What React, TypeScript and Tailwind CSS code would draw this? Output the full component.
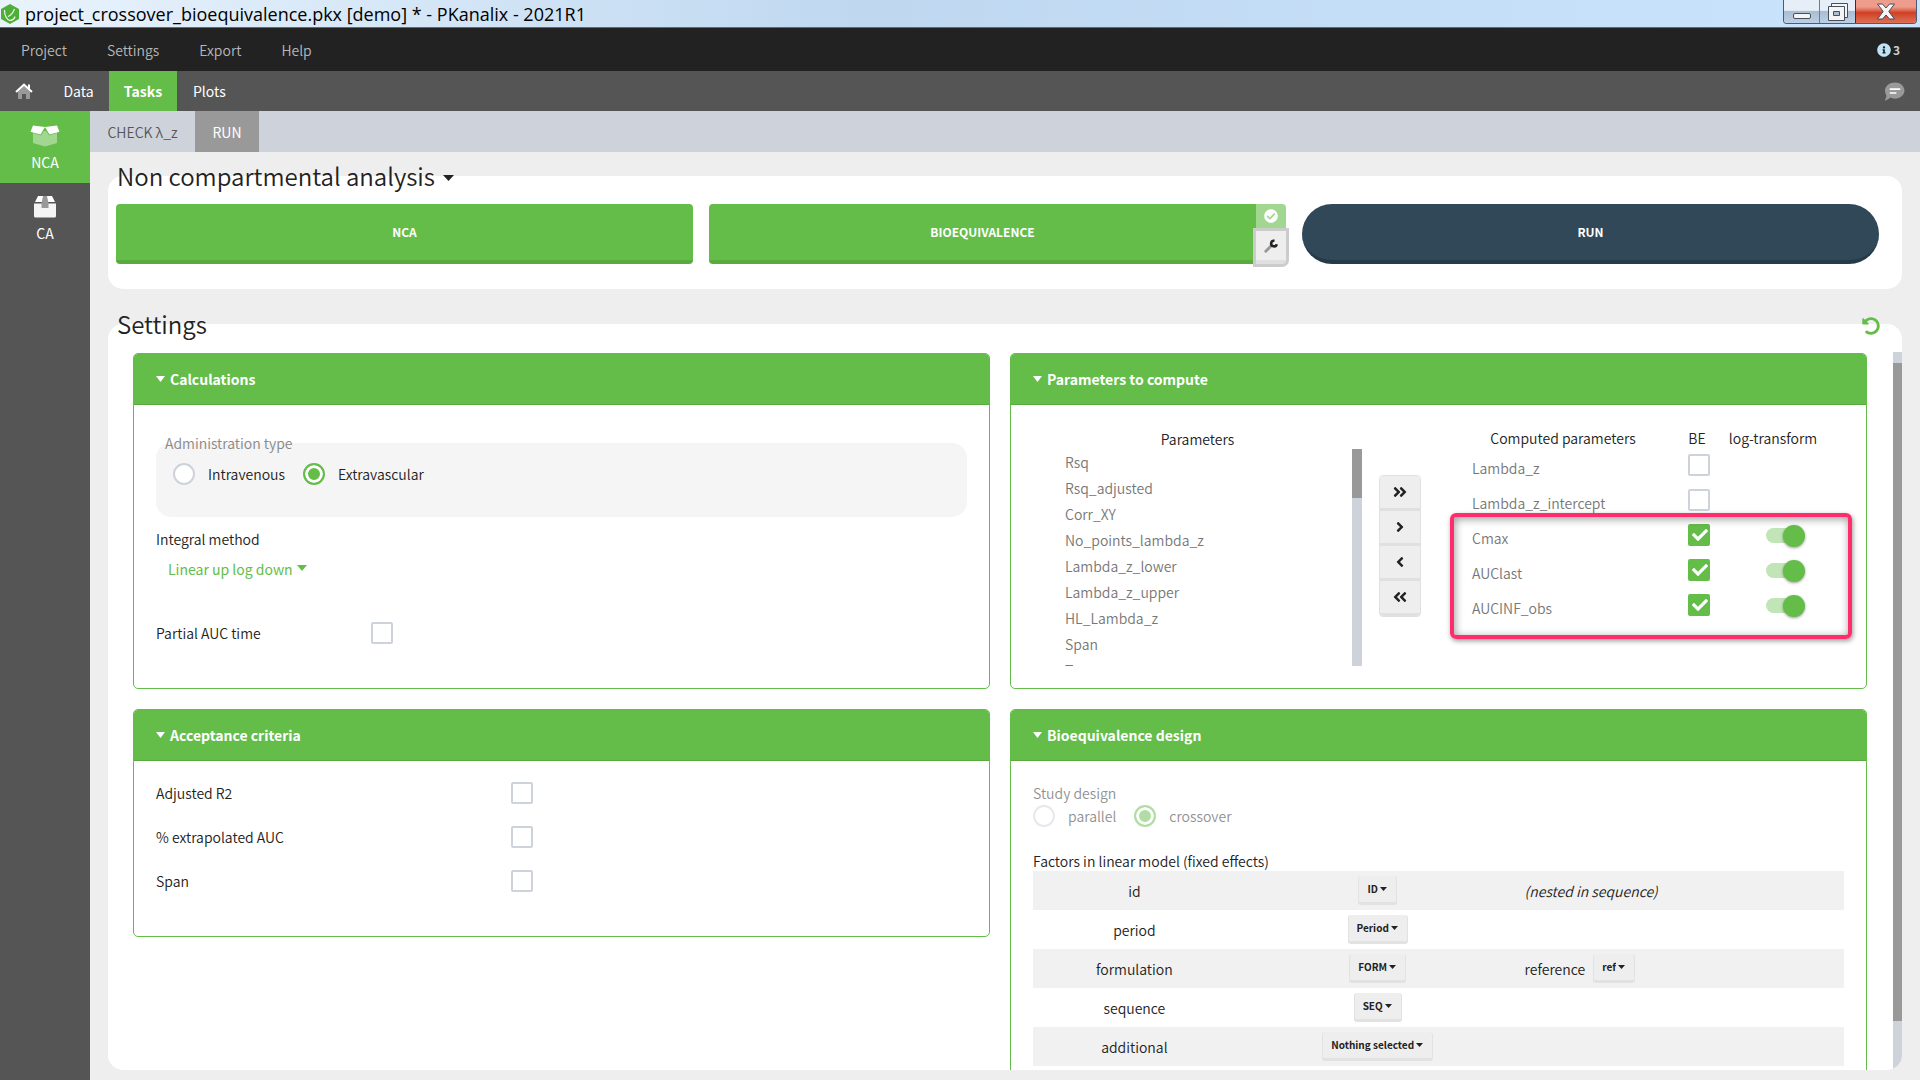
import { useState } from "react";
import type { ReactNode } from "react";
import {
  FaAngleDoubleLeft,
  FaAngleDoubleRight,
  FaAngleLeft,
  FaAngleRight,
  FaCheck,
  FaCheckCircle,
  FaInfoCircle,
  FaUndoAlt,
} from "react-icons/fa";

const MENU = ["Project", "Settings", "Export", "Help"];

const PARAMETERS = [
  "Rsq",
  "Rsq_adjusted",
  "Corr_XY",
  "No_points_lambda_z",
  "Lambda_z_lower",
  "Lambda_z_upper",
  "HL_Lambda_z",
  "Span",
  "T0",
];

const COMPUTED = [
  { name: "Lambda_z", be: false },
  { name: "Lambda_z_intercept", be: false },
  { name: "Cmax", be: true },
  { name: "AUClast", be: true },
  { name: "AUCINF_obs", be: true },
];

const FACTORS = [
  { name: "id", value: "ID" },
  { name: "period", value: "Period" },
  { name: "formulation", value: "FORM" },
  { name: "sequence", value: "SEQ" },
  { name: "additional", value: "Nothing selected" },
];

const CRITERIA = ["Adjusted R2", "% extrapolated AUC", "Span"];

export default function App() {
  return (
    <div className="flex h-screen flex-col overflow-hidden bg-[#eeeeee] font-['Noto_Sans_CJK_SC','Open_Sans',sans-serif] text-sm leading-5 font-[350] text-[#222222]">
      <TitleBar />

      <nav className="flex h-[43px] shrink-0 items-center pr-5 pl-[21px] bg-[#222222]">
        <div className="flex flex-1 gap-10 text-[#b8b8b8]">
          {MENU.map((m) => (
            <button key={m} type="button">{m}</button>
          ))}
        </div>
        <button type="button" className="flex items-center gap-[2px] text-xs font-bold text-[#cccccc]">
          <FaInfoCircle className="h-[14px] w-[14px] text-[#bfe3f5]" />3
        </button>
      </nav>

      <nav className="flex h-10 shrink-0 items-stretch bg-[#555555] pr-[15px] text-white">
        <button type="button" aria-label="Home" className="flex w-12 items-center justify-center">
          <HomeIcon />
        </button>
        <button type="button" className="w-[61px] font-normal">Data</button>
        <button type="button" className="w-[68px] bg-[#64bd49] font-bold">Tasks</button>
        <button type="button" className="px-4 font-normal">Plots</button>
        <button type="button" aria-label="Comments" className="ml-auto">
          <CommentIcon />
        </button>
      </nav>

      <div className="flex min-h-0 flex-1">
        <aside className="flex w-[90px] shrink-0 flex-col bg-[#555555] font-normal text-white">
          <button type="button" className="flex h-[72px] flex-col items-center bg-[#64bd49] pt-[14px]">
            <OpenBoxIcon />
            <span className="mt-[5px]">NCA</span>
          </button>
          <button type="button" className="flex h-[72px] flex-col items-center pt-[13px]">
            <BoxIcon />
            <span className="mt-[5px]">CA</span>
          </button>
        </aside>

        <div className="flex min-w-0 flex-1 flex-col">
          <div className="flex h-[41px] shrink-0 bg-[#ced2db]">
            <button type="button" className="w-[105px] text-[#555555]">CHECK λ_z</button>
            <button type="button" className="w-16 bg-[#999999] font-normal text-white">RUN</button>
          </div>

          <main className="flex min-h-0 flex-1 flex-col gap-[35px] pt-6 pr-[18px] pb-[10px] pl-[18px]">
            <section className="rounded-[15px] bg-white pr-[23px] pb-[25px] pl-2">
              <h2 className="-mt-[18px] flex h-9 items-center gap-2 pl-px text-2xl">
                Non compartmental analysis
                <Caret className="mt-1 h-[6px] w-[11px]" />
              </h2>
              <div className="mt-[10px] grid grid-cols-3 gap-4 text-xs font-bold text-white">
                <button type="button" className="h-[60px] rounded border-b-4 border-[#59ab40] bg-[#64bd49]">
                  NCA
                </button>
                <div className="flex">
                  <button type="button" className="h-[60px] flex-1 rounded-l border-b-4 border-[#59ab40] bg-[#64bd49]">
                    BIOEQUIVALENCE
                  </button>
                  <div className="flex w-[30px] flex-col">
                    <button type="button" aria-label="Bioequivalence enabled" className="flex h-[27px] items-center justify-center rounded-tr bg-[#a2d791] pb-[3px]">
                      <FaCheckCircle className="h-[14px] w-[14px]" />
                    </button>
                    <button
                      type="button"
                      aria-label="Bioequivalence settings"
                      className="flex flex-1 items-center justify-center rounded-br border-b-4 border-[#e0e0e0] bg-[#eeeeee] ring-[3px] ring-[#cccccc]"
                    >
                      <WrenchIcon />
                    </button>
                  </div>
                </div>
                <button type="button" className="h-[60px] rounded-full border-b-4 border-[#263a47] bg-[#304858]">
                  RUN
                </button>
              </div>
            </section>

            <section className="relative flex min-h-0 flex-1 flex-col rounded-[15px] bg-white">
              <h2 className="-mt-[18px] flex h-9 shrink-0 items-center pl-[9px] text-2xl">Settings</h2>
              <button type="button" aria-label="Reset settings" className="absolute -top-[7px] right-[22px] text-[#64bd49]">
                <FaUndoAlt className="h-[18px] w-[18px]" />
              </button>
              <div className="mt-[10px] flex min-h-0 flex-1 overflow-hidden rounded-br-[15px]">
                <div className="grid min-w-0 flex-1 grid-cols-2 content-start items-start gap-5 overflow-hidden pt-px pr-[26px] pl-[25px]">
                  <Calculations />
                  <ParametersToCompute />
                  <AcceptanceCriteria />
                  <BioequivalenceDesign />
                </div>
                <div className="w-[9px] bg-[#ced2db] pt-[11px]">
                  <div className="h-[93%] bg-[#999999]" />
                </div>
              </div>
            </section>
          </main>
        </div>
      </div>
    </div>
  );
}

function TitleBar() {
  return (
    <header className="flex h-7 shrink-0 items-start border-b border-[#5b6b7c] bg-linear-to-r from-[#e9f3fc] via-[#bfd8f0] via-45% to-[#cbe4fe] pr-[3px] pl-px">
      <svg viewBox="0 0 18 20" className="mt-1 h-5 w-[18px]">
        <path d="M9 0l9 5v10l-9 5-9-5V5z" fill="#4fae38" />
        <path d="M3.500 6c0 5 1.500 9 5.500 10.500 3-.500 4.500-2 5-4M7 12.500c3-1 5-3.500 6.500-7.500" fill="none" stroke="#e8f7e4" strokeWidth="1.200" />
      </svg>
      <h1 className="flex-1 pl-[6px] font-['Open_Sans',sans-serif] text-lg leading-7 font-normal text-black">
        project_crossover_bioequivalence.pkx [demo] * - PKanalix - 2021R1
      </h1>
      <div className="flex h-6 overflow-hidden rounded-b border border-t-0 border-[#4d5b70]">
        <button type="button" aria-label="Minimize" className="flex w-9 items-end justify-center border-r border-[#6b7b90] bg-linear-to-b from-[#e6eef7] from-45% via-[#a9bed3] via-50% to-[#bccfe4] pb-1">
          <span className="h-[6px] w-[18px] rounded-xs border border-[#45505f] bg-[#f5f5f5]" />
        </button>
        <button type="button" aria-label="Restore" className="flex w-[35px] items-center justify-center bg-linear-to-b from-[#e6eef7] from-45% via-[#a9bed3] via-50% to-[#bccfe4]">
          <svg viewBox="0 0 20 18" className="h-[18px] w-5" fill="#f5f5f5" stroke="#45505f">
            <path d="M3.500.5h16v14h-16z" />
            <path d="M.5 3.500h16v14h-16z" />
            <path d="M5.500 8.500h6v4h-6z" fill="#a9bed3" />
          </svg>
        </button>
        <button type="button" aria-label="Close" className="flex w-[61px] items-center justify-center border-l border-[#5c2018] bg-linear-to-b from-[#ee9c8c] from-30% via-[#cf3f24] via-55% to-[#dd6f55]">
          <svg viewBox="0 0 20 17" className="h-[17px] w-5">
            <path d="M1.500 1h5L10 5l3.500-4h5l-5.700 7.500 5.700 7.500h-5L10 12l-3.500 4h-5l5.700-7.500z" fill="#f5f5f5" stroke="#4b4b58" />
          </svg>
        </button>
      </div>
    </header>
  );
}

function Panel({ title, children }: { title: string; children: ReactNode }) {
  return (
    <section className="overflow-hidden rounded-[5px] border border-[#64bd49] bg-white">
      <h3 className="border-b border-[#59ab40] bg-[#64bd49]">
        <button type="button" className="flex h-[50px] w-full items-center gap-[5px] px-[22px] font-bold text-white">
          <Caret className="h-[6px] w-[9px]" />
          {title}
        </button>
      </h3>
      {children}
    </section>
  );
}

function Calculations() {
  const [admin, setAdmin] = useState("Extravascular");
  return (
    <Panel title="Calculations">
      <div className="px-[22px] pt-7 pb-11">
        <fieldset className="rounded-[15px] bg-[#f5f5f5] px-[17px] pb-8">
          <legend className="-ml-2 h-5 text-[#888888]">Administration type</legend>
          <div className="flex gap-[18px] pt-[10px]">
            {["Intravenous", "Extravascular"].map((o) => (
              <Radio key={o} name="admin" label={o} checked={admin === o} onChange={() => setAdmin(o)} />
            ))}
          </div>
        </fieldset>
        <label htmlFor="integral" className="mt-3 block">Integral method</label>
        <div className="relative mt-[10px] ml-3 inline-flex h-5 items-center text-[#64bd49]">
          <select id="integral" className="field-sizing-content h-5 appearance-none bg-transparent pr-[14px] font-normal outline-none">
            <option>Linear up log down</option>
          </select>
          <Caret className="pointer-events-none absolute top-[6px] right-0 h-[6px] w-[10px]" />
        </div>
        <label className="mt-[43px] flex items-center">
          <span className="w-[215px]">Partial AUC time</span>
          <Checkbox />
        </label>
      </div>
    </Panel>
  );
}

function ParametersToCompute() {
  return (
    <Panel title="Parameters to compute">
      <div className="flex px-[22px] pt-6 pb-[22px]">
        <div className="flex-1">
          <h4 className="h-5 text-center">Parameters</h4>
          <div className="flex h-[217px] overflow-hidden">
            <ul className="flex-1 pl-8 text-[#777777]">
              {PARAMETERS.map((p) => (
                <li key={p} className="leading-[26px]">{p}</li>
              ))}
            </ul>
            <div className="w-[10px] bg-[#ced2db]">
              <div className="h-[49px] bg-[#999999]" />
            </div>
          </div>
        </div>

        <div className="mt-[46px] ml-[17px] flex w-[42px] flex-col self-start overflow-hidden rounded border border-[#e0e0e0]">
          <MoveButton label="Add all"><FaAngleDoubleRight /></MoveButton>
          <MoveButton label="Add"><FaAngleRight /></MoveButton>
          <MoveButton label="Remove"><FaAngleLeft /></MoveButton>
          <MoveButton label="Remove all"><FaAngleDoubleLeft /></MoveButton>
        </div>

        <div className="relative mr-[26px] ml-[35px]">
          <table>
            <thead>
              <tr className="h-[19px] leading-[19px]">
                <th className="w-[214px] p-0 font-[350]">Computed parameters</th>
                <th className="w-[58px] p-0 pr-1 font-[350]">BE</th>
                <th className="w-[90px] p-0 font-[350] whitespace-nowrap">log-transform</th>
              </tr>
            </thead>
            <tbody>
              {COMPUTED.map((c) => (
                <tr key={c.name} className="h-[35px]">
                  <td className="p-0 pt-1 pl-4 text-[#777777]">{c.name}</td>
                  <td className="p-0 pb-px">
                    <div className="flex justify-center">
                      <Checkbox label={`${c.name} BE`} defaultChecked={c.be} />
                    </div>
                  </td>
                  <td className="p-0 pr-[13px]">
                    {c.be && <Toggle label={`${c.name} log-transform`} />}
                  </td>
                </tr>
              ))}
            </tbody>
          </table>
          {/* highlight around the parameters used for bioequivalence */}
          <div className="pointer-events-none absolute top-[84px] -right-[34px] -left-[6px] h-[126px] rounded-md border-4 border-[#ff2d6b] shadow-[1px_2px_5px_rgba(0,0,0,0.4),inset_1px_2px_8px_rgba(0,0,0,0.4)]" />
        </div>
      </div>
    </Panel>
  );
}

function AcceptanceCriteria() {
  return (
    <Panel title="Acceptance criteria">
      <div className="flex flex-col gap-[22px] px-[22px] pt-[21px] pb-11">
        {CRITERIA.map((c) => (
          <label key={c} className="flex items-center">
            <span className="w-[355px]">{c}</span>
            <Checkbox />
          </label>
        ))}
      </div>
    </Panel>
  );
}

function BioequivalenceDesign() {
  return (
    <Panel title="Bioequivalence design">
      <div className="px-[22px] pt-[22px] pb-6">
        <div className="opacity-50">
          <div>Study design</div>
          <div className="mt-[2px] flex gap-[18px]">
            <Radio name="design" label="parallel" disabled />
            <Radio name="design" label="crossover" checked disabled />
          </div>
        </div>
        <h4 className="mt-6">Factors in linear model (fixed effects)</h4>
        <table className="w-full table-fixed">
          <tbody>
            {FACTORS.map((f) => (
              <tr key={f.name} className="h-[39px] odd:bg-[#f1f1f1]">
                <td className="w-1/4 p-0 text-center">{f.name}</td>
                <td className="w-[35%] p-0 text-center">
                  <SmallSelect label={f.name} value={f.value} />
                </td>
                <td className="p-0 pl-[5px]">
                  {f.name === "id" && <i>(nested in sequence)</i>}
                  {f.name === "formulation" && (
                    <span className="flex items-center gap-2">
                      reference
                      <SmallSelect label="reference" value="ref" />
                    </span>
                  )}
                </td>
              </tr>
            ))}
          </tbody>
        </table>
      </div>
    </Panel>
  );
}

function MoveButton({ label, children }: { label: string; children: ReactNode }) {
  return (
    <button
      type="button"
      aria-label={label}
      className="flex h-[35px] items-center justify-center border-b-[3px] border-[#e0e0e0] bg-[#eeeeee] text-base"
    >
      {children}
    </button>
  );
}

function SmallSelect({ label, value }: { label: string; value: string }) {
  return (
    <span className="relative inline-flex align-middle">
      <select
        aria-label={label}
        className="field-sizing-content h-[29px] appearance-none rounded-[3px] border-x border-b-[3px] border-[#e2e2e2] bg-[#eeeeee] pr-[18px] pl-2 text-[10px] font-bold outline-none"
      >
        <option>{value}</option>
      </select>
      <Caret className="pointer-events-none absolute top-[11px] right-[10px] h-1 w-[7px]" />
    </span>
  );
}

function Checkbox({ label, defaultChecked }: { label?: string; defaultChecked?: boolean }) {
  return (
    <span className="relative flex h-[22px] w-[22px]">
      <input
        type="checkbox"
        aria-label={label}
        defaultChecked={defaultChecked}
        className="peer h-[22px] w-[22px] appearance-none rounded-xs border-2 border-[#ced2db] bg-white checked:border-[#64bd49] checked:bg-[#64bd49]"
      />
      <FaCheck className="pointer-events-none absolute top-[3px] left-[4px] hidden h-4 w-4 text-white peer-checked:block" />
    </span>
  );
}

function Radio({
  name,
  label,
  checked = false,
  disabled,
  onChange,
}: {
  name: string;
  label: string;
  checked?: boolean;
  disabled?: boolean;
  onChange?: () => void;
}) {
  return (
    <label className="flex items-center gap-[13px]">
      <input
        type="radio"
        name={name}
        checked={checked}
        disabled={disabled}
        onChange={() => onChange?.()}
        className="h-[22px] w-[22px] appearance-none rounded-full border-2 border-[#ced2db] bg-white checked:border-[#64bd49] checked:bg-[#64bd49] checked:shadow-[inset_0_0_0_3px_#fff]"
      />
      {label}
    </label>
  );
}

function Toggle({ label }: { label: string }) {
  return (
    <label className="relative ml-auto flex h-[22px] w-[39px] items-center">
      <input type="checkbox" role="switch" aria-label={label} defaultChecked className="peer h-[15px] w-[34px] appearance-none rounded-full bg-[#cccccc] checked:bg-[#c1e5b6]" />
      <span className="absolute left-0 h-[22px] w-[22px] rounded-full bg-[#999999] shadow-[0_1px_3px_rgba(0,0,0,0.4)] peer-checked:left-[17px] peer-checked:bg-[#64bd49]" />
    </label>
  );
}

function Caret({ className }: { className?: string }) {
  return (
    <svg viewBox="0 0 10 6" preserveAspectRatio="none" fill="currentColor" className={className}>
      <path d="M0 0h10L5 6z" />
    </svg>
  );
}

function HomeIcon() {
  return (
    <svg viewBox="0 0 18 16" className="h-4 w-[18px]">
      <path d="M3 8.500L9 3l6 5.500V15a1 1 0 0 1-1 1h-3v-5H7v5H4a1 1 0 0 1-1-1z" fill="#999" />
      <path d="M1 9l8-7.300L17 9M14 1.500v4" fill="none" stroke="#fff" strokeWidth="2" />
    </svg>
  );
}

function CommentIcon() {
  return (
    <svg viewBox="0 0 22 20" className="h-[19px] w-[21px]">
      <path d="M11.500.500C17 .500 21.500 4.200 21.500 9s-4.500 8.500-10 8.500c-2 0-3.700-.400-5.200-1.200C5 18 2.800 19.300.500 19.500c1-1.300 1.800-3 2-5C1.700 13 1 11 1 9 1 4.200 6 .500 11.500.500z" fill="#999" />
      <path d="M6 7.500h11M6 11.500h7" stroke="#fff" strokeWidth="1.600" />
    </svg>
  );
}

function OpenBoxIcon() {
  return (
    <svg viewBox="0 0 30 22" className="h-[22px] w-[30px]">
      <path d="M3 6h24v12l-12 3.500L3 18z" fill="#a2d791" />
      <path d="M15 4l-4 6.500L3 8z M15 4l4 6.500L27 8z" fill="#64bd49" />
      <path d="M3 .500L15 2l-4.500 7.500L.500 6.700z M27 .500L15 2l4.500 7.500 10-2.800z" fill="#fff" />
    </svg>
  );
}

function BoxIcon() {
  return (
    <svg viewBox="0 0 22 22" className="h-[22px] w-[22px]">
      <path d="M4 0h14l3 6H1z" fill="#fff" />
      <path d="M0 7.500h22V20a1.500 1.500 0 0 1-1.500 1.500h-19A1.500 1.500 0 0 1 0 20z" fill="#f4f4f4" />
      <path d="M9 0h4l1.500 7.500V12h-7V7.500z" fill="#999" />
    </svg>
  );
}

function WrenchIcon() {
  return (
    <svg viewBox="0 0 14 14" className="h-[14px] w-[14px]">
      <path d="M1.800 12.200L7.500 6.500" stroke="#999" strokeWidth="3" strokeLinecap="round" />
      <path d="M10.500 1.800a2.800 2.800 0 1 0 2.200 3.400" fill="none" stroke="#222" strokeWidth="2.600" />
    </svg>
  );
}
